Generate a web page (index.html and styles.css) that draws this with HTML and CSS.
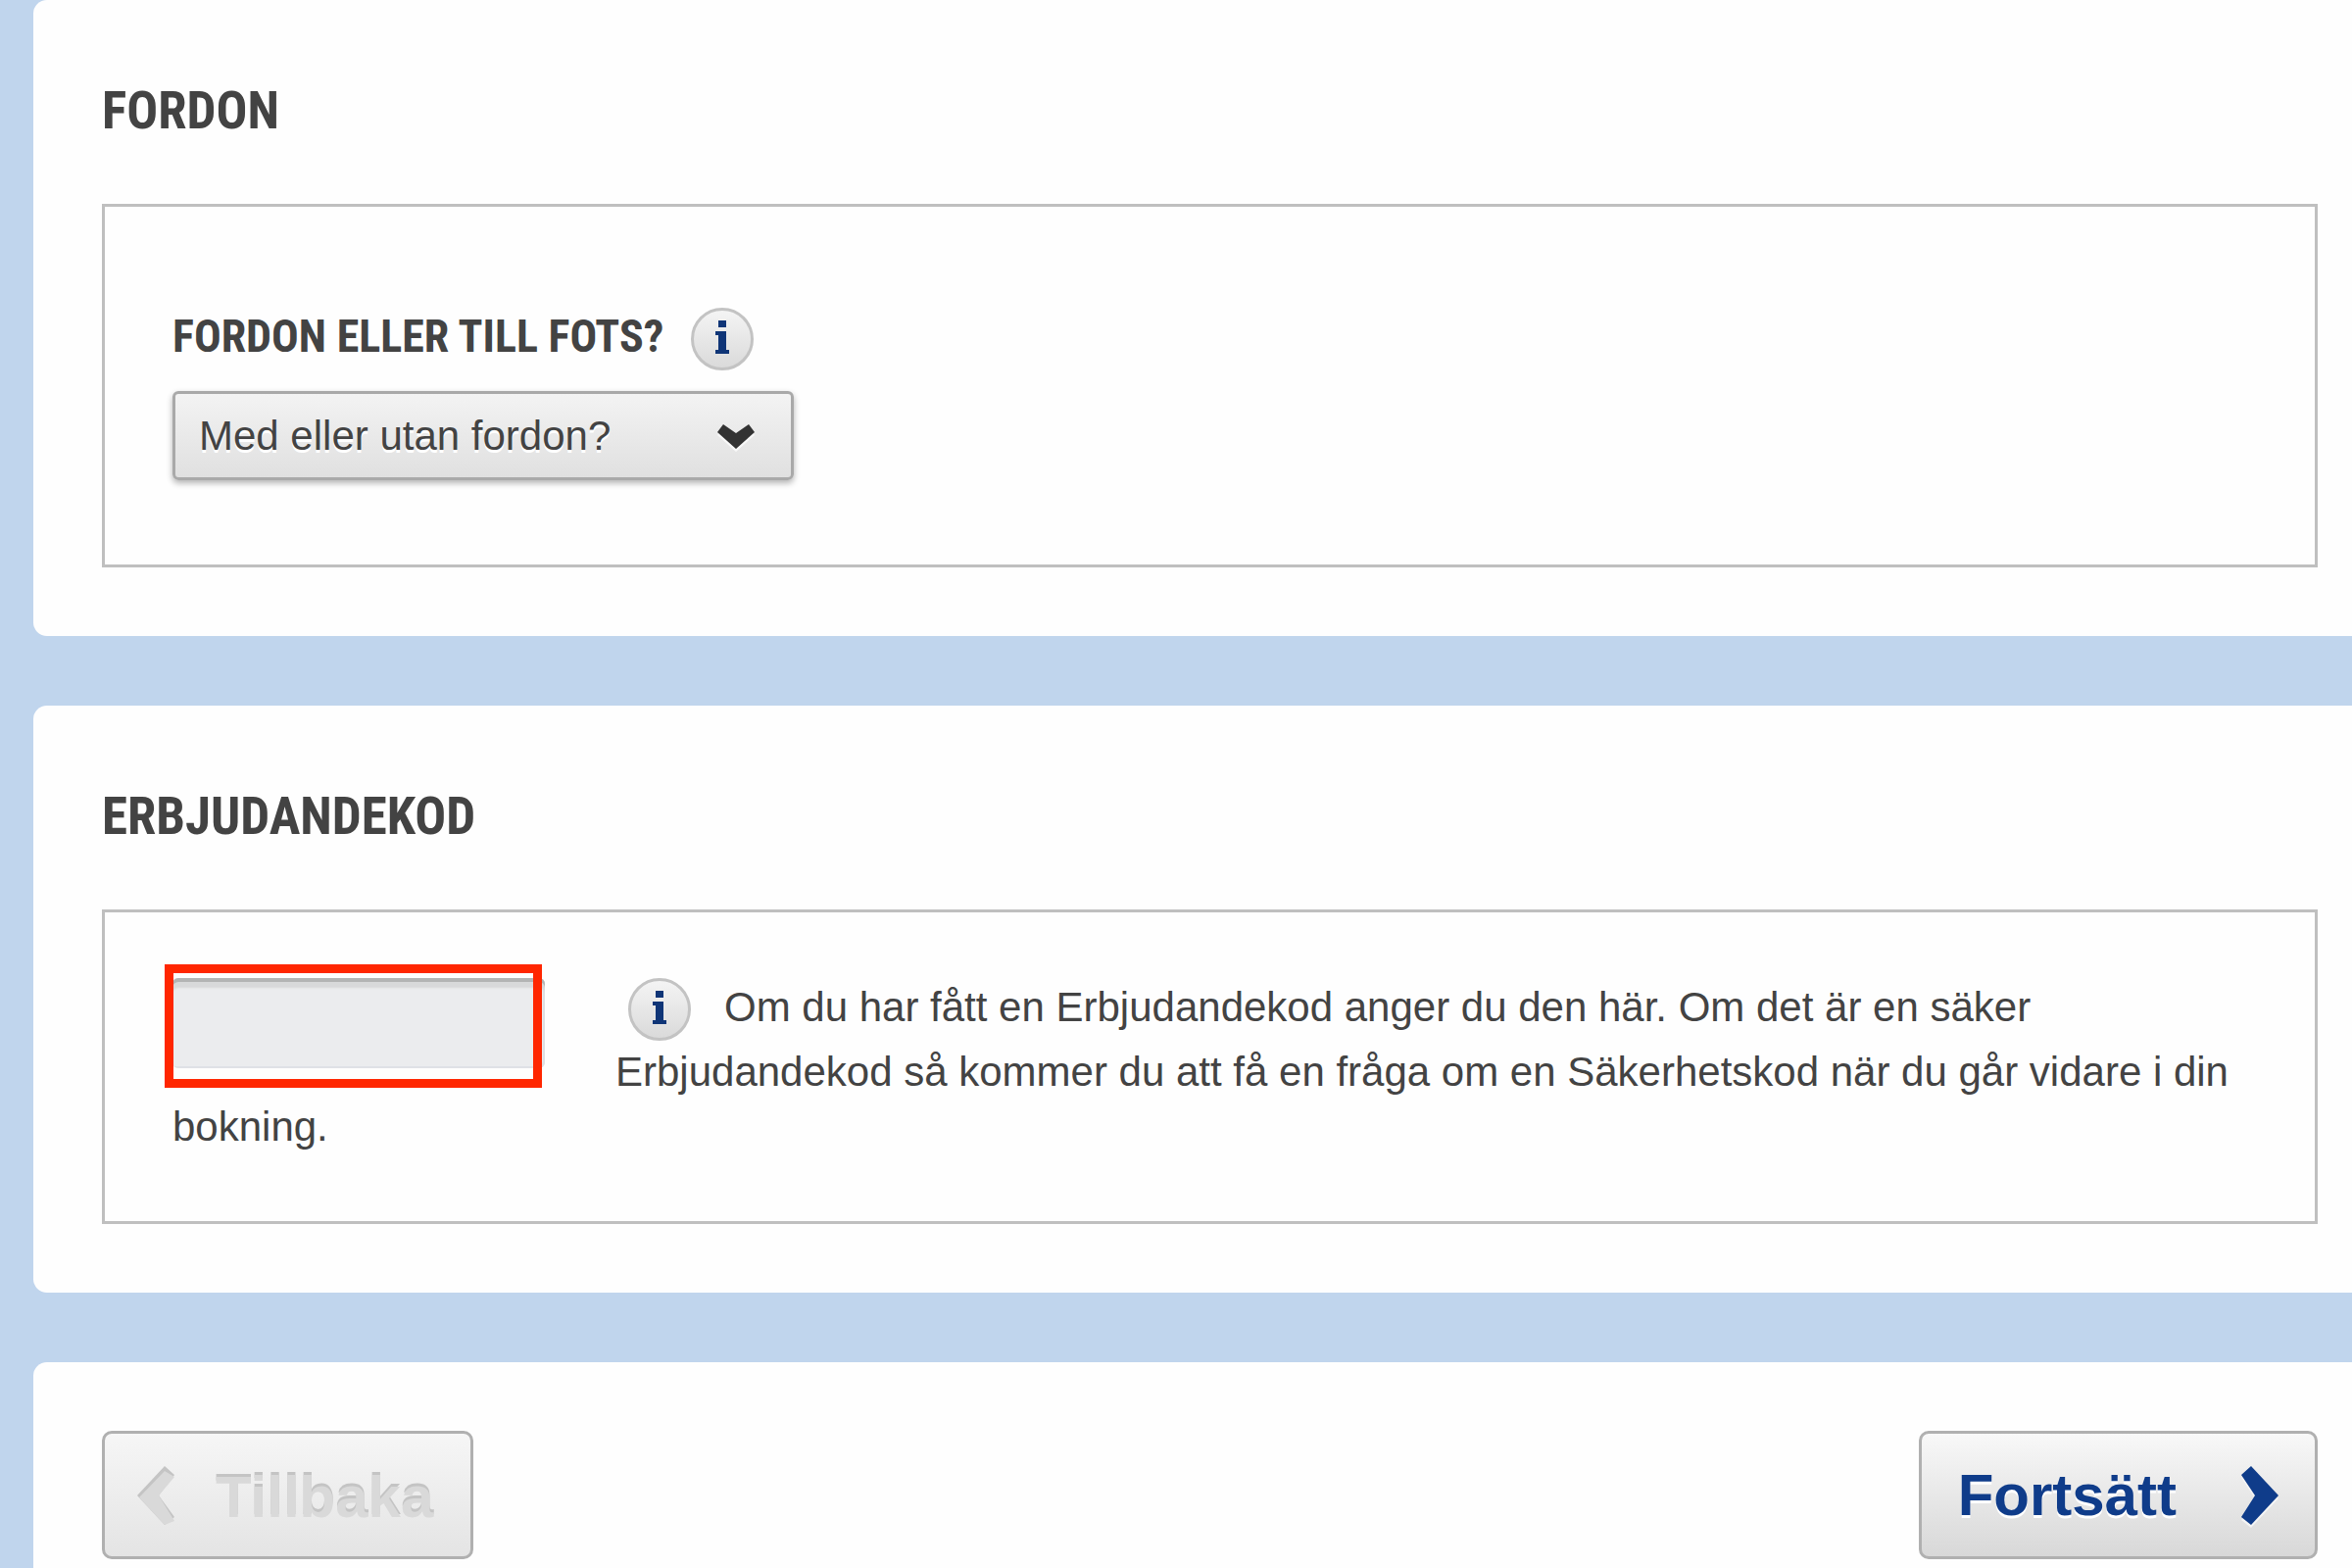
FILE: index.html
```html
<!DOCTYPE html>
<html lang="sv">
<head>
  <meta charset="utf-8">
  <meta name="viewport" content="width=device-width, initial-scale=1">
  <title>Bokning</title>
  <link rel="stylesheet" href="styles.css">
</head>
<body>
  <form class="booking">
    <section class="panel">
      <h2 class="panel-title">FORDON</h2>
      <div class="box box-vehicle">
        <div class="label-row">
          <label class="field-label" for="vehicle">FORDON ELLER TILL FOTS?</label>
          <button class="info" type="button" aria-label="Information om fordon">
            <svg class="info-icon" viewBox="0 0 16 34" aria-hidden="true"><path d="M4 0h8v7H4zM1 11h11v19h3v4H1v-4h3V15H1z"/></svg>
          </button>
        </div>
        <div class="select">
          <select class="select-field" id="vehicle">
            <option>Med eller utan fordon?</option>
          </select>
          <svg class="select-arrow" viewBox="0 0 38 26" aria-hidden="true"><path d="M6 1L19 10L32 1L38 9L19 26L0 9Z"/></svg>
        </div>
      </div>
    </section>

    <section class="panel">
      <h2 class="panel-title" id="code-title">ERBJUDANDEKOD</h2>
      <div class="box">
        <div class="code">
          <input class="code-field" type="text" aria-labelledby="code-title">
        </div>
        <p class="hint">
          <button class="info info-inline" type="button" aria-label="Information om erbjudandekod">
            <svg class="info-icon" viewBox="0 0 16 34" aria-hidden="true"><path d="M4 0h8v7H4zM1 11h11v19h3v4H1v-4h3V15H1z"/></svg>
          </button>Om du har fått en Erbjudandekod anger du den här. Om det är en säker Erbjudandekod så kommer du att få en fråga om en Säkerhetskod när du går vidare i din bokning.
        </p>
      </div>
    </section>

    <section class="panel panel-actions">
      <button class="action action-back" type="button" disabled>
        <svg class="action-arrow" viewBox="0 0 38 60" aria-hidden="true">
          <path class="arrow-edge" d="M28 0L38 9L22 30L38 52L28 60L0 30Z"/>
          <path class="arrow-face" d="M28 5L38 11L22 30L38 56L28 60L2 32Z"/>
        </svg>
        <span class="action-text">Tillbaka</span>
      </button>
      <button class="action action-next" type="submit">
        <span class="action-text">Fortsätt</span>
        <svg class="action-arrow" viewBox="0 0 38 60" aria-hidden="true"><path d="M10 0L0 9L14 30L0 52L10 60L38 30Z"/></svg>
      </button>
    </section>
  </form>
</body>
</html>
```

FILE: styles.css
```css
* {
  box-sizing: border-box;
}

body {
  margin: 0;
  background: #c0d5ed;
  color: #434343;
  font-family: "Liberation Sans", Arial, sans-serif;
  font-size: 42px;
  line-height: 56px;
}

button,
input,
select {
  margin: 0;
  color: inherit;
  font: inherit;
}

.booking {
  display: flex;
  flex-direction: column;
  gap: 71px;
  min-height: 100vh;
  padding-left: 34px;
}

.panel {
  padding: 81px 35px 70px 70px;
  border-radius: 14px 0 0 14px;
  background: #fefefe;
}

.panel-title,
.field-label {
  font-family: "Roboto Condensed", "Open Sans Condensed", sans-serif;
  font-weight: bold;
}

.panel-title {
  margin: 0 0 63px;
  font-size: 53px;
  line-height: 64px;
}

.box {
  padding: 67px 69px 68px;
  border: 3px solid #bfbfbf;
}

.box-vehicle {
  padding: 103px 69px 86px;
}

.label-row {
  display: flex;
  align-items: center;
  gap: 28px;
  margin-bottom: 21px;
}

.field-label {
  padding-bottom: 6px;
  font-size: 46px;
}

.info {
  display: inline-flex;
  align-items: center;
  justify-content: center;
  width: 64px;
  height: 64px;
  padding: 0 0 4px;
  border: 3px solid #c3c3c3;
  border-radius: 50%;
  background: linear-gradient(#f4f4f4, #dadada);
}

.info-icon {
  width: 16px;
  height: 34px;
  fill: #0f3577;
}

.info-inline {
  margin: 0 34px 4px 13px;
  vertical-align: -3px;
}

.select {
  display: grid;
  align-items: center;
  width: 634px;
  max-width: 100%;
}

.select-field,
.select-arrow {
  grid-area: 1 / 1;
}

.select-field {
  width: 100%;
  height: 91px;
  padding: 0 80px 0 24px;
  border: 3px solid #a9a9a9;
  border-radius: 6px;
  appearance: none;
  background: linear-gradient(#f3f3f3, #e0e0e0);
  box-shadow: 0 3px 6px rgba(0, 0, 0, 0.3);
  text-shadow: 0 3px 0 #fff;
}

.select-arrow {
  justify-self: end;
  width: 38px;
  height: 26px;
  margin-right: 40px;
  fill: #333;
  filter: drop-shadow(0 3px 0 #f8f8f8);
  pointer-events: none;
}

.code {
  position: relative;
  float: left;
  width: 380px;
  margin-right: 72px;
}

/* Highlight frame around the code field */
.code::after {
  content: "";
  position: absolute;
  inset: -14px 3px -20px -8px;
  border: 9px solid #ff2600;
  pointer-events: none;
}

.code-field {
  display: block;
  width: 100%;
  height: 92px;
  padding: 0 20px;
  border: 0;
  border-radius: 6px;
  background: #ebecee;
  box-shadow: inset 0 4px 0 #b3b4b4, inset 0 10px 2px #d8d9da, inset -2px -2px 0 #dfe1e6;
}

.hint {
  margin: 0;
}

.panel-actions {
  display: flex;
  flex: 1;
  align-items: flex-start;
  justify-content: space-between;
  padding: 70px 35px 0 70px;
  border-radius: 14px 0 0 0;
}

.action {
  display: flex;
  align-items: center;
  height: 131px;
  border: 3px solid #b0b0b0;
  border-radius: 10px;
  font-size: 60px;
  font-weight: bold;
  line-height: 72px;
}

.action-arrow {
  width: 38px;
  height: 60px;
}

.action-back {
  gap: 42px;
  padding: 0 38px 0 33px;
  background: linear-gradient(#f6f6f6, #e4e4e4);
  color: #d9d9d9;
  text-shadow: 0 -3px 0 #c4c4c4;
}

.action-back .action-text {
  padding-top: 4px;
}

.arrow-edge {
  fill: #c4c4c4;
}

.arrow-face {
  fill: #d9d9d9;
}

.action-next {
  gap: 66px;
  padding: 0 37px;
  background: linear-gradient(#f8f8f8, #d8d8d8);
  color: #0f3c8a;
  text-shadow: 0 3px 0 #fff;
}

.action-next .action-arrow {
  fill: currentColor;
  filter: drop-shadow(0 3px 0 #f4f4f4);
}
```
